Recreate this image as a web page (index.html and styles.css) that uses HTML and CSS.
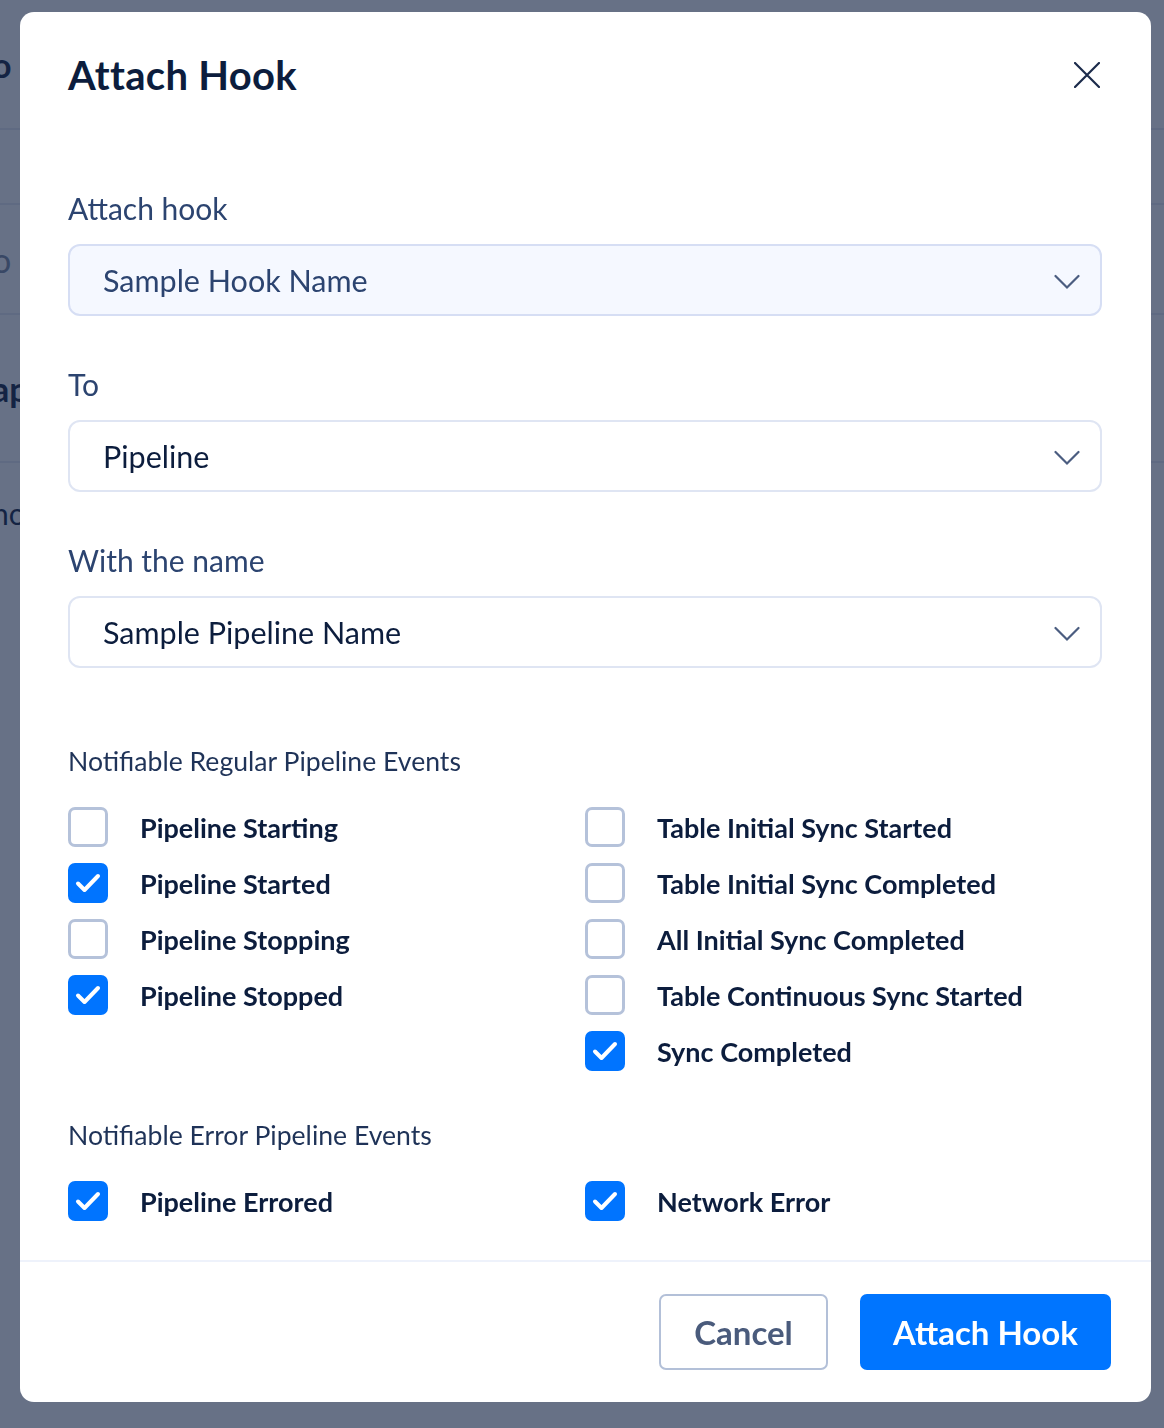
FILE: index.html
```html
<!DOCTYPE html>
<html lang="en">
<head>
  <meta charset="UTF-8" />
  <meta name="viewport" content="width=device-width, initial-scale=1.0"/>
  <title>Attach Hook</title>
  <link rel="stylesheet" href="styles.css">
</head>
<body>

<div class="page">
  <div class="page-row row-head">o</div>
  <div class="page-row row-tabs"></div>
  <div class="page-row row-search">o</div>
  <div class="page-row row-title">ap</div>
  <div class="page-row row-text">ho</div>
</div>

<div class="overlay">
  <div class="modal">
    <div class="modal-head">
      <h1>Attach Hook</h1>
      <button class="close" aria-label="Close">
        <svg width="26" height="26" viewBox="0 0 26 26"><path d="M1 1L25 25M25 1L1 25" stroke="#1b2b4b" stroke-width="2.2" stroke-linecap="round"/></svg>
      </button>
    </div>

    <div class="modal-body">
      <label class="field-label">Attach hook</label>
      <div class="select select-filled">
        <span>Sample Hook Name</span>
        <svg class="chev" width="26" height="16" viewBox="0 0 26 16"><path d="M1.5 2L13 13.5L24.5 2" fill="none" stroke="#4b5d80" stroke-width="2.2" stroke-linecap="round"/></svg>
      </div>

      <label class="field-label">To</label>
      <div class="select">
        <span>Pipeline</span>
        <svg class="chev" width="26" height="16" viewBox="0 0 26 16"><path d="M1.5 2L13 13.5L24.5 2" fill="none" stroke="#4b5d80" stroke-width="2.2" stroke-linecap="round"/></svg>
      </div>

      <label class="field-label">With the name</label>
      <div class="select">
        <span>Sample Pipeline Name</span>
        <svg class="chev" width="26" height="16" viewBox="0 0 26 16"><path d="M1.5 2L13 13.5L24.5 2" fill="none" stroke="#4b5d80" stroke-width="2.2" stroke-linecap="round"/></svg>
      </div>

      <div class="group-title">Notifiable Regular Pipeline Events</div>
      <div class="checks">
        <div class="col">
          <div class="check"><span class="box"></span>Pipeline Starting</div>
          <div class="check on"><span class="box"><svg viewBox="0 0 40 40"><path d="M10 20.5L16.5 27L30 13" fill="none" stroke="#fff" stroke-width="4" stroke-linecap="round" stroke-linejoin="round"/></svg></span>Pipeline Started</div>
          <div class="check"><span class="box"></span>Pipeline Stopping</div>
          <div class="check on"><span class="box"><svg viewBox="0 0 40 40"><path d="M10 20.5L16.5 27L30 13" fill="none" stroke="#fff" stroke-width="4" stroke-linecap="round" stroke-linejoin="round"/></svg></span>Pipeline Stopped</div>
        </div>
        <div class="col">
          <div class="check"><span class="box"></span>Table Initial Sync Started</div>
          <div class="check"><span class="box"></span>Table Initial Sync Completed</div>
          <div class="check"><span class="box"></span>All Initial Sync Completed</div>
          <div class="check"><span class="box"></span>Table Continuous Sync Started</div>
          <div class="check on"><span class="box"><svg viewBox="0 0 40 40"><path d="M10 20.5L16.5 27L30 13" fill="none" stroke="#fff" stroke-width="4" stroke-linecap="round" stroke-linejoin="round"/></svg></span>Sync Completed</div>
        </div>
      </div>

      <div class="group-title">Notifiable Error Pipeline Events</div>
      <div class="checks">
        <div class="col">
          <div class="check on"><span class="box"><svg viewBox="0 0 40 40"><path d="M10 20.5L16.5 27L30 13" fill="none" stroke="#fff" stroke-width="4" stroke-linecap="round" stroke-linejoin="round"/></svg></span>Pipeline Errored</div>
        </div>
        <div class="col">
          <div class="check on"><span class="box"><svg viewBox="0 0 40 40"><path d="M10 20.5L16.5 27L30 13" fill="none" stroke="#fff" stroke-width="4" stroke-linecap="round" stroke-linejoin="round"/></svg></span>Network Error</div>
        </div>
      </div>
    </div>

    <div class="modal-foot">
      <button class="btn btn-cancel">Cancel</button>
      <button class="btn btn-primary">Attach Hook</button>
    </div>
  </div>
</div>

</body>
</html>
```

FILE: styles.css
```css
body {
  margin: 0;
  padding: 0;
  font-family: Lato, "Noto Sans", sans-serif;
  background: #fff;
}
.page {
  height: 1428px;
  overflow: hidden;
}
.page-row {
  border-bottom: 2px solid #e6eaf2;
  font-size: 34px;
  font-weight: 700;
  color: #0c1d3d;
  margin-left: -8px;
  display: flex;
  align-items: center;
}
.row-head { height: 128px; }
.row-tabs { height: 73px; }
.row-search { height: 108px; font-weight: 400; color: #7a869e; }
.row-title { height: 146px; }
.row-text { height: 100px; border-bottom: none; font-weight: 400; font-size: 30px; }

.overlay {
  position: fixed;
  inset: 0;
  background: rgba(24, 40, 72, 0.66);
  padding: 12px 13px 26px 20px;
  box-sizing: border-box;
}
.modal {
  background: #fff;
  border-radius: 14px;
  height: 100%;
  display: flex;
  flex-direction: column;
  box-sizing: border-box;
}
.modal-head {
  display: flex;
  justify-content: space-between;
  align-items: center;
  padding: 39px 51px 0 48px;
}
.modal-head h1 {
  margin: 0;
  font-family: Lato, sans-serif;
  font-size: 40px;
  font-weight: 700;
  color: #0c1d3d;
  letter-spacing: 0.3px;
}
.close {
  background: none;
  border: none;
  padding: 0;
  width: 26px;
  height: 26px;
  cursor: pointer;
}
.modal-body {
  flex: 1;
  padding: 106px 49px 0 48px;
  display: flex;
  flex-direction: column;
}
.field-label {
  font-size: 30px;
  color: #2c4470;
  line-height: 36px;
  margin-top: -15px;
}
.field-label + .select {
  margin-top: 18px;
}
.select {
  height: 72px;
  border: 2px solid #dfe5f3;
  border-radius: 12px;
  box-sizing: border-box;
  display: flex;
  align-items: center;
  justify-content: space-between;
  padding: 0 20px 0 33px;
  font-size: 30.5px;
  color: #0c1d3d;
  margin-bottom: 65px;
}
.select-filled {
  background: #f5f8ff;
  border-color: #d6def4;
  color: #2c4470;
}
.chev {
  margin-top: 4px;
}
.group-title {
  font-size: 26.6px;
  color: #1f3358;
  margin-top: 12px;
  margin-bottom: 30px;
}
.checks {
  display: grid;
  grid-template-columns: 517px 1fr;
  margin-bottom: 36px;
}
.col {
  display: flex;
  flex-direction: column;
  gap: 16px;
}
.check {
  display: flex;
  align-items: center;
  gap: 32px;
  height: 40px;
  font-size: 27px;
  font-weight: 700;
  color: #0c1d3d;
}
.box {
  width: 40px;
  height: 40px;
  border: 3px solid #b5c2da;
  border-radius: 7px;
  box-sizing: border-box;
  flex: none;
  display: flex;
}
.box svg {
  width: 40px;
  height: 40px;
  margin: -3px;
}
.check.on .box {
  background: #0074ff;
  border-color: #0074ff;
}
.modal-foot {
  border-top: 2px solid #eef2fb;
  display: flex;
  justify-content: flex-end;
  gap: 32px;
  padding: 32px 40px 32px 0;
}
.btn {
  height: 76px;
  border-radius: 7px;
  font-family: Lato, sans-serif;
  font-size: 33px;
  font-weight: 700;
  cursor: pointer;
}
.btn-cancel {
  width: 169px;
  background: #fff;
  border: 2px solid #b3c0d8;
  color: #4a5b7c;
}
.btn-primary {
  width: 251px;
  background: #0075ff;
  border: none;
  color: #fff;
}
```
